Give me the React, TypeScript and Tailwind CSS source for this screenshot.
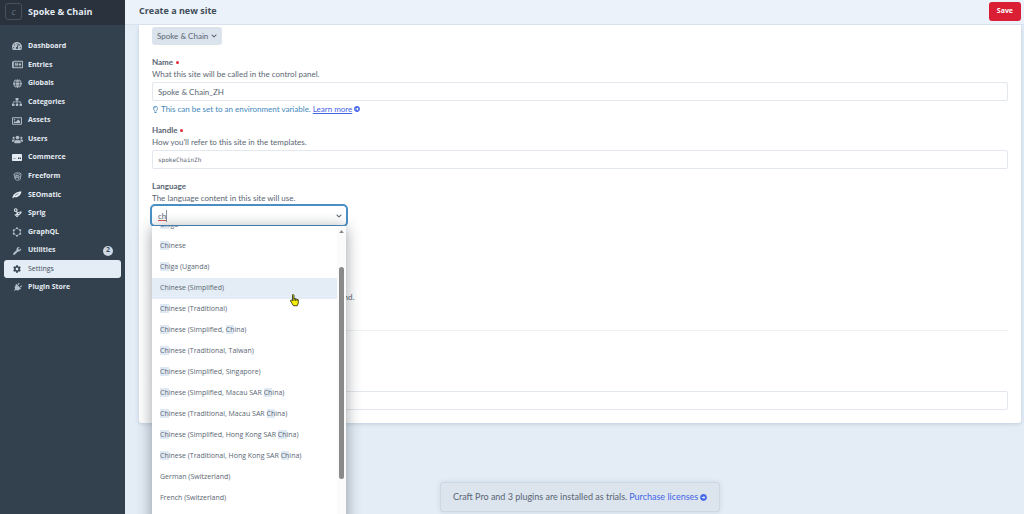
import { useState } from 'react';
import clsx from 'clsx';
import {
  FaArrowAltCircleRight,
  FaChevronDown,
  FaCog,
  FaGlobe,
  FaPlug,
  FaRegImage,
  FaRegLightbulb,
  FaRegNewspaper,
  FaSitemap,
  FaTachometerAlt,
  FaUsers,
  FaWrench
} from 'react-icons/fa';

import type { ReactNode } from 'react';

const CommerceIcon = () => (
  <svg viewBox="0 0 20 14" width="10" height="7">
    <rect width="20" height="14" rx="1.5" fill="#e4ebf2" />
    <rect x="3" y="8" width="4" height="2" fill="#8b97a4" />
    <rect x="12" y="7" width="2.5" height="3" fill="#33404d" />
    <rect x="15.5" y="7" width="2.5" height="3" fill="#33404d" />
  </svg>
);

const FreeformIcon = () => (
  <svg viewBox="0 0 20 20" width="9" height="9" fill="none" stroke="currentColor" strokeWidth="1.8">
    <path d="M2 5c3-4 13-4 16-1l-2 12c-3 3-8 3-11 0z" />
    <path d="M3 6c4 3 9 2 12-1M6 15V9h8M6 12h6M14 9l-2 7M8 5l3-2" />
  </svg>
);

const SeomaticIcon = () => (
  <svg viewBox="0 0 20 16" width="10" height="8" fill="#e4ebf2">
    <path d="M1 14c0-4 2-7 5-9 4-3 8-4 13-4-1 5-3 8-7 10-3 2-6 2-8 1l-2 3z" />
    <path d="M6 9l7-4" stroke="#33404d" strokeWidth="1.2" fill="none" />
  </svg>
);

const SprigIcon = () => (
  <svg viewBox="0 0 20 22" width="9" height="10" fill="none" stroke="#dbe3ea" strokeWidth="2.4">
    <circle cx="6" cy="4.5" r="3" />
    <path d="M8 7c2 3 1 6 0 8M8 14c3-5 6-6 10-5-1 4-5 6-10 5z" />
    <path d="M4 14l5 5M9 19l3-3" />
  </svg>
);

const GraphqlIcon = () => (
  <svg viewBox="0 0 20 20" width="10" height="10" fill="none" stroke="currentColor" strokeWidth="1.3">
    <path d="M10 2.5l6.5 3.8v7.4L10 17.5l-6.5-3.8V6.3z" />
    <g fill="currentColor" stroke="none">
      <circle cx="10" cy="2.5" r="2" />
      <circle cx="16.5" cy="6.3" r="2" />
      <circle cx="16.5" cy="13.7" r="2" />
      <circle cx="10" cy="17.5" r="2" />
      <circle cx="3.5" cy="13.7" r="2" />
      <circle cx="3.5" cy="6.3" r="2" />
    </g>
  </svg>
);

const NAV_ITEMS: { label: string; icon: ReactNode; badge?: number }[] = [
  { label: 'Dashboard', icon: <FaTachometerAlt size={10} /> },
  { label: 'Entries', icon: <FaRegNewspaper size={11} /> },
  { label: 'Globals', icon: <FaGlobe size={9} /> },
  { label: 'Categories', icon: <FaSitemap size={10} /> },
  { label: 'Assets', icon: <FaRegImage size={10} /> },
  { label: 'Users', icon: <FaUsers size={11} /> },
  { label: 'Commerce', icon: <CommerceIcon /> },
  { label: 'Freeform', icon: <FreeformIcon /> },
  { label: 'SEOmatic', icon: <SeomaticIcon /> },
  { label: 'Sprig', icon: <SprigIcon /> },
  { label: 'GraphQL', icon: <GraphqlIcon /> },
  { label: 'Utilities', icon: <FaWrench size={8} />, badge: 2 },
  { label: 'Settings', icon: <FaCog size={8} /> },
  { label: 'Plugin Store', icon: <FaPlug size={9} className="rotate-45" /> }
];

const LANGUAGES = [
  'Chiga',
  'Chinese',
  'Chiga (Uganda)',
  'Chinese (Simplified)',
  'Chinese (Traditional)',
  'Chinese (Simplified, China)',
  'Chinese (Traditional, Taiwan)',
  'Chinese (Simplified, Singapore)',
  'Chinese (Simplified, Macau SAR China)',
  'Chinese (Traditional, Macau SAR China)',
  'Chinese (Simplified, Hong Kong SAR China)',
  'Chinese (Traditional, Hong Kong SAR China)',
  'German (Switzerland)',
  'French (Switzerland)'
];

function Sidebar() {
  return (
    <aside className="w-[125px] shrink-0 bg-[#33404d] font-['Open_Sans',sans-serif] text-[#e4ebf2]">
      <a href="#" className="flex h-[25px] items-center gap-[6px] bg-[#29323d] pb-[2px] pl-[5px]">
        <span className="flex size-[17px] items-center justify-center rounded-[3px] border border-[#46525f] text-[8px] text-[#687582] italic">
          C
        </span>
        <span className="text-[9px] font-bold">Spoke &amp; Chain</span>
      </a>
      <nav className="mt-3 px-1">
        <ul className="grid h-[260px] auto-rows-fr">
          {NAV_ITEMS.map(({ label, icon, badge }) => (
            <li key={label}>
              <a
                href="#"
                className={clsx(
                  'flex h-full items-center rounded-[3px] pr-2 pl-[7px] text-[7px]',
                  label === 'Settings' ? 'bg-[#e4edf6] font-medium text-[#3f4d5a]' : 'font-bold'
                )}
              >
                <span
                  className={clsx(
                    'mr-[5px] flex w-3 justify-center',
                    label === 'Settings' ? 'text-[#3f4d5a]' : 'text-[#b4bec8]'
                  )}
                >
                  {icon}
                </span>
                {label}
                {badge && (
                  <span className="ml-auto flex size-[10px] items-center justify-center rounded-full bg-[#cdd8e4] text-[#3f4d5a]">
                    {badge}
                  </span>
                )}
              </a>
            </li>
          ))}
        </ul>
      </nav>
    </aside>
  );
}

interface FieldProps {
  id: string;
  label: string;
  instructions: string;
  required?: boolean;
  children: ReactNode;
}

function Field({ id, label, instructions, required, children }: FieldProps) {
  return (
    <div className="flex flex-col">
      <label htmlFor={id} className="flex h-3 items-center gap-[3px] font-bold">
        {label}
        {required && <span className="size-[3px] rounded-full bg-[#e12d39]" />}
      </label>
      <p className="mb-[2px] h-3 leading-3">{instructions}</p>
      {children}
    </div>
  );
}

// wraps every match of the query in a <mark>
function Highlighted({ text, query }: { text: string; query: string }) {
  if (!query) return <>{text}</>;
  const parts = text.split(new RegExp(`(\\b${query})`, 'i'));

  return (
    <>
      {parts.map((part, i) =>
        part.toLowerCase() === query.toLowerCase() ? (
          <mark key={i} className="bg-[#dfe9f4] text-inherit">
            {part}
          </mark>
        ) : (
          part
        )
      )}
    </>
  );
}

function LanguageSelect() {
  const [query, setQuery] = useState('ch');

  return (
    <div className="relative w-[194px]">
      <input
        id="language"
        role="combobox"
        aria-expanded="true"
        aria-controls="language-list"
        value={query}
        onChange={(e) => setQuery(e.target.value)}
        className="block h-[19px] w-full rounded-[3px] bg-white px-[6px] underline decoration-[#d9534f] ring-2 ring-[#4a8fc4] outline-none"
      />
      <span className="absolute top-1 left-[14px] h-3 w-px bg-[#8793a0]" />
      <FaChevronDown size={6} className="absolute top-[7px] right-1" />
      <div className="absolute top-5 left-0 z-10 flex h-[320px] w-full overflow-hidden bg-white shadow-[0_2px_14px_rgba(31,41,51,0.45)]">
        <ul
          id="language-list"
          role="listbox"
          aria-label="Language"
          className="-mt-[11px] flex-1 font-['Open_Sans',sans-serif] text-[7px]"
        >
          {LANGUAGES.map((language) => (
            <li
              key={language}
              role="option"
              aria-selected={language === 'Chinese (Simplified)'}
              className="group flex h-[21px] items-center px-2 whitespace-pre aria-selected:bg-[#e4edf6]"
            >
              <span>
                <Highlighted text={language} query={query} />
              </span>
            </li>
          ))}
        </ul>
        <div className="flex w-[9px] flex-col items-center bg-[#fbfbfb] pt-1">
          <svg viewBox="0 0 6 4" width="5" height="3" fill="#858585">
            <path d="M3 0l3 4H0z" />
          </svg>
          <div className="mt-[34px] h-[212px] w-[5px] rounded-full bg-[#8a8a8a]" />
        </div>
      </div>
      <svg viewBox="0 0 18 26" width="9" height="13" className="absolute top-[88px] left-[138px] z-20">
        <path
          d="M5 1.5c1.5-1 3 0 3 1.5v7l2-1 2 1 2 .5 2.5 1v7l-2 5H7l-4-6-2-4c0-2 2-2 4 0V3z"
          fill="#f6ee00"
          stroke="#1a1a1a"
          strokeWidth="1.6"
        />
        <path d="M8 9v5M11 10v4M14 11v3" stroke="#1a1a1a" strokeWidth="1.3" />
      </svg>
    </div>
  );
}

const inputClass =
  'h-[19px] w-full rounded-[2px] border border-[#e3e7ee] bg-white px-[5px] outline-none';

export default function App() {
  const [name, setName] = useState('Spoke & Chain_ZH');
  const [handle, setHandle] = useState('spokeChainZh');
  const [baseUrl, setBaseUrl] = useState('');

  return (
    <div className="flex h-screen overflow-hidden bg-[#e4edf6] font-[Lato,sans-serif] text-[8px] text-[#596673]">
      <Sidebar />
      <div className="relative flex min-w-0 flex-1 flex-col">
        <header className="z-30 flex h-[25px] shrink-0 items-center justify-between border-b border-[#d8e2ee] bg-[#ebf2f9] pr-[3px] pb-[2px] pl-[14px] font-['Open_Sans',sans-serif]">
          <h1 className="text-[9px] font-bold text-[#3f4d5a]">Create a new site</h1>
          <button className="h-[19px] rounded-[3px] bg-[#da1f35] px-2 text-[7px] font-bold text-white">
            Save
          </button>
        </header>

        <main className="mr-[3px] ml-[14px] flex shrink-0 flex-col rounded-b-[3px] bg-white px-[13px] pt-[2px] pb-[13px] shadow-[0_1px_4px_rgba(50,80,120,0.2)]">
          <button className="mb-[11px] flex h-[18px] items-center gap-[3px] self-start rounded-[3px] bg-[#dbe3ed] px-[5px]">
            Spoke &amp; Chain
            <FaChevronDown size={6} />
          </button>

          <Field id="name" label="Name" instructions="What this site will be called in the control panel." required>
            <input id="name" className={inputClass} value={name} onChange={(e) => setName(e.target.value)} />
            <p className="mt-[2px] flex h-3 items-center gap-[2px] text-[#4388bb]">
              <FaRegLightbulb size={7} />
              This can be set to an environment variable.
              <a href="#" className="flex items-center gap-[2px] text-[#4464e8]">
                <span className="underline">Learn more</span>
                <FaArrowAltCircleRight size={6} />
              </a>
            </p>
          </Field>

          <div className="mt-[9px] mb-[11px]">
            <Field id="handle" label="Handle" instructions="How you'll refer to this site in the templates." required>
              <input
                id="handle"
                className={clsx(inputClass, "font-['DejaVu_Sans_Mono',monospace] text-[6px]")}
                value={handle}
                onChange={(e) => setHandle(e.target.value)}
              />
            </Field>
          </div>

          <Field id="language" label="Language" instructions="The language content in this site will use.">
            <LanguageSelect />
          </Field>

          <div className="mt-[54px] border-b border-[#eef1f4] pb-[17px]">
            <Field
              id="primary"
              label="Make this the primary site"
              instructions="The primary site will be loaded by default in the front end."
            >
              <input id="primary" type="checkbox" className="size-2" />
            </Field>
          </div>

          <div className="mt-[34px]">
            <Field id="base-url" label="Base URL" instructions="The base URL for the site.">
              <input
                id="base-url"
                className={inputClass}
                value={baseUrl}
                onChange={(e) => setBaseUrl(e.target.value)}
              />
            </Field>
          </div>
        </main>

        <aside className="absolute bottom-[2px] left-[315px] flex h-[30px] items-center gap-[2px] rounded-[3px] border border-[#ccd8e4] bg-[#dce4ee] px-3 text-[9px] shadow-[0_0_5px_rgba(50,80,120,0.12)]">
          Craft Pro and 3 plugins are installed as trials.
          <a href="#" className="flex items-center gap-[2px] text-[#4464e8]">
            Purchase licenses
            <FaArrowAltCircleRight size={7} />
          </a>
        </aside>
      </div>
    </div>
  );
}
